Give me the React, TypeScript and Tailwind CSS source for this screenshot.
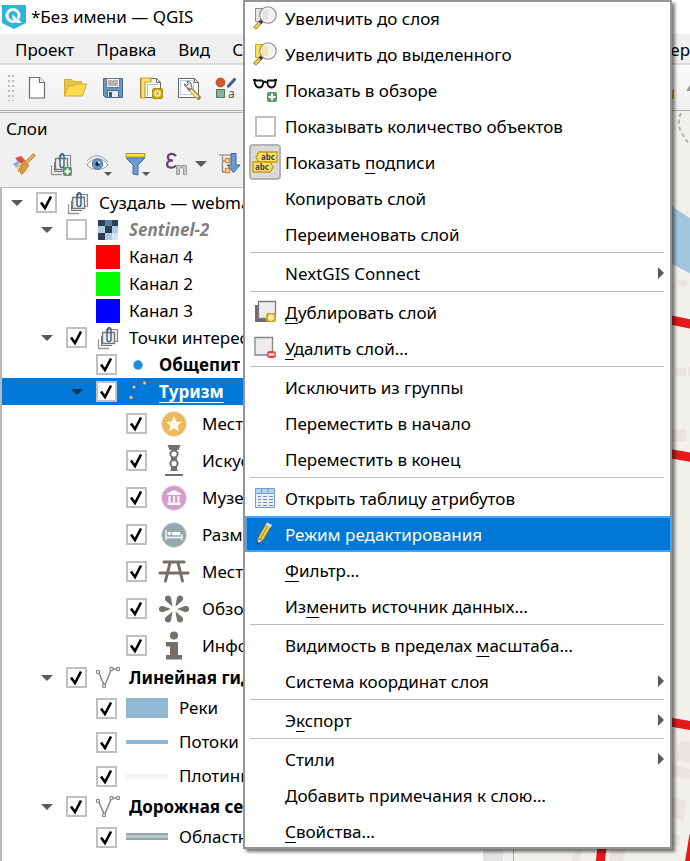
import type { ReactNode } from 'react'

/* ---------- Icons ---------- */

const logo = (
  <svg width="26" height="26" viewBox="0 0 26 26" className="shrink-0">
    <path d="M1 1h24v18l-12 6-12-6z" fill="#2fb4d8" />
    <circle cx="12" cy="11.500" r="6" fill="none" stroke="#fff" strokeWidth="3" />
    <path d="M12 10l9 9h-5l-5-5z" fill="#fff" />
    <path d="M12 10.500l5 5" stroke="#2fb4d8" strokeWidth="1" />
  </svg>
)

const newFile = (
  <svg width="24" height="24" viewBox="0 0 24 24" fill="#fff" stroke="#6d6d6d" strokeWidth="1.200">
    <path d="M4.500 1.500h10l5 5v15.500h-15z" />
    <path d="M14.500 1.500v5h5" />
  </svg>
)

const folder = (
  <svg width="24" height="24" viewBox="0 0 24 24" stroke="#d2aa2f" strokeWidth="1">
    <path d="M1.500 19.500v-16h7l2 2h8v4" fill="#e9c344" />
    <path d="M1.500 20l4-10h5l2-2h11l-4 12z" fill="#fcdc4d" />
  </svg>
)

const floppy = (
  <svg width="24" height="24" viewBox="0 0 24 24">
    <path d="M2.500 2.500h19v19h-17l-2-2z" fill="#6c95c2" stroke="#456c97" />
    <path d="M5.500 2.500h13v9h-13z" fill="#f2f2f2" stroke="#777" />
    <path d="M7 5h10M7 7h10M7 9h10" stroke="#777" strokeWidth="1" />
    <path d="M6.500 14.500h11v7h-11z" fill="#e8ecef" stroke="#456c97" />
    <path d="M8 16h3v5H8z" fill="#34597f" />
  </svg>
)

const star = (
  <g>
    <rect x="13.500" y="12.500" width="10" height="10" rx="1.500" fill="#c6a315" stroke="#b08e0b" />
    <path d="M18.500 13.500v8M14.500 17.500h8M15.700 14.700l5.600 5.600M21.300 14.700l-5.600 5.600" stroke="#fff6c4" strokeWidth="1.400" />
    <circle cx="18.500" cy="17.500" r="1.300" fill="#c6a315" />
  </g>
)

const newLayout = (
  <svg width="24" height="24" viewBox="0 0 24 24">
    <path d="M1.500 2.500h16l4 4v15h-20z" fill="#fff" stroke="#666" />
    <path d="M17.500 2.500v4h4" fill="none" stroke="#666" />
    <path d="M2 2h10v4H6v16H2z" fill="#fbe37a" stroke="#c6a315" strokeWidth="1.200" />
    <path d="M8.500 8.500h11M8.500 8.500v11" stroke="#9fbfe8" />
    {star}
  </svg>
)

const layoutManager = (
  <svg width="24" height="24" viewBox="0 0 24 24">
    <path d="M1.500 2.500h16l4 4v15h-20z" fill="#fff" stroke="#666" />
    <path d="M17.500 2.500v4h4" fill="none" stroke="#666" />
    <path d="M3.500 4.500h13v14h-13z" fill="none" stroke="#b4cdf5" />
    <path d="M12.500 12.500l9 9" stroke="#8a7a4a" strokeWidth="4.500" strokeLinecap="round" />
    <path d="M13.500 14l7.500 7.500" stroke="#f1dc8b" strokeWidth="2.800" />
    <path d="M8 10l5 3.500 2-2-1.500-5c-.800-1-2-1.500-3.500-1l1.500 2.500-2 1.500-2-1.500c0 1 0 1.500.500 2z" fill="#e9e9e9" stroke="#555" strokeWidth=".900" />
  </svg>
)

const styleManager = (
  <svg width="24" height="24" viewBox="0 0 24 24">
    <circle cx="5.500" cy="6.500" r="4.500" fill="#d0592a" stroke="#a5431d" strokeWidth=".700" />
    <path d="M13.500 10l6-6.500" stroke="#41658c" strokeWidth="3.200" strokeLinecap="round" />
    <path d="M1.500 13.500h8v8h-8z" fill="#8fb39a" stroke="#48775a" />
    <text x="13" y="21.500" fontSize="12" fontFamily="Noto Sans, sans-serif" fill="#555">a</text>
  </svg>
)

const brush = (
  <svg width="24" height="24" viewBox="0 0 24 24">
    <path d="M3 6l6-2 5 5-6 3z" fill="#e34b4b" />
    <path d="M1 12l5-3 6 6-5 3z" fill="#79a8e0" />
    <path d="M3 15l8 0 5 3-6 4z" fill="#f6cf3f" />
    <path d="M7 10l9 8-6 4-6-6z" fill="#f7e08a" opacity=".700" />
    <path d="M12 8l5 5.500-7 9-2-2 2-3-4 2 2-4z" fill="#d9993e" stroke="#a8742a" strokeWidth=".600" />
    <path d="M14.500 10.500l7-7" stroke="#b9822f" strokeWidth="3.600" strokeLinecap="round" />
    <path d="M14.500 10.500l7-7" stroke="#e3b05e" strokeWidth="1.800" strokeLinecap="round" />
  </svg>
)

const groupShapes = (
  <g fill="none">
    <path d="M2.500 13v9.500H13" stroke="#999" strokeWidth="1.300" />
    <path d="M5.500 10v9.500H16" stroke="#777" />
    <path d="M10.500 3.500h11v12h-11z" fill="#f1f1f1" stroke="#888" strokeWidth="1.200" />
    <path d="M6.500 6.500h12v11h-12z" fill="#ececec" stroke="#777" strokeWidth="1.300" />
    <path d="M11 6v7c0 3.500 4 3.500 4 0V4c0-3-3.500-3-3.500 0v2" stroke="#3d5f80" strokeWidth="1.400" />
  </g>
)

const group = (
  <svg width="24" height="24" viewBox="0 0 24 24">{groupShapes}</svg>
)

const addGroup = (
  <svg width="24" height="24" viewBox="0 0 24 24">
    {groupShapes}
    <rect x="14" y="15" width="9" height="9" rx="2" fill="#5a9669" />
    <path d="M18.500 16.500v6M15.500 19.500h6" stroke="#fff" strokeWidth="2" />
  </svg>
)

const eye = (
  <svg width="26" height="24" viewBox="0 0 26 24">
    <path d="M1 13c5-8 17-8 21 0-5 6-16 6-21 0z" fill="#fff" stroke="#999" />
    <path d="M1 9c5-7 15-7 21 1" fill="none" stroke="#999" />
    <circle cx="11.500" cy="12" r="5.200" fill="#6b9bce" stroke="#45709c" />
    <circle cx="11.500" cy="12" r="2.200" fill="#1b2735" />
    <circle cx="13" cy="10.500" r="1.100" fill="#fff" />
    <path d="M18 20h8l-4 4z" fill="#555" />
  </svg>
)

const funnel = (
  <svg width="26" height="24" viewBox="0 0 26 24">
    <path d="M1 1.500h19v3.500H1z" fill="#fbe244" stroke="#b59a14" />
    <path d="M1 6h19l-7 7v10l-5-1v-9z" fill="#6d9bcd" stroke="#466f9c" />
    <path d="M17 20h8l-4 4z" fill="#555" />
  </svg>
)

const expression = (
  <svg width="24" height="24" viewBox="0 0 24 24">
    <path d="M12 4c-3-4-9-2-8 2 .500 2 2 2.500 5 2.500-4 0-6 1.500-6 4 0 4 7 4 9 1" fill="none" stroke="#6b3f73" strokeWidth="2.200" />
    <path d="M12.500 13.500h10v9h-3v-5l-1-2h-2l-1 2v5h-3z" fill="#c9c9c9" stroke="#999" />
  </svg>
)

const expand = (
  <svg width="24" height="24" viewBox="0 0 24 24">
    <path d="M1 3h16M4.500 4v16h6M4.500 9h4" fill="none" stroke="#999" strokeWidth="1.600" />
    <path d="M7.500 6.500h4v4h-4zM7.500 16.500h4v4h-4z" fill="#fde2b8" stroke="#f08c1a" strokeWidth="1.500" />
    <path d="M13 1.500h5v11.500h4l-6.500 7.500L9 13h4z" fill="#6d9bcd" stroke="#3c638e" />
  </svg>
)

const raster = (
  <svg width="20" height="20" viewBox="0 0 20 20" shapeRendering="crispEdges">
    <path d="M0 0h20v20H0z" fill="#aecbe6" />
    <path d="M0 0h7v6H0zM14 0h6v6h-6zM7 6h7v7H7zM0 13h7v7H0z" fill="#2d3e50" />
    <path d="M14 13h6v7h-6z" fill="#d4e4f3" />
    <path d="M7 0h7v6H7z" fill="#557da3" />
  </svg>
)

const vectorLine = (
  <svg width="24" height="24" viewBox="0 0 24 24" fill="#fff" stroke="#888" strokeWidth="1.200">
    <path d="M2.500 6l6 14 7-17h6" fill="none" strokeWidth="1.500" />
    <circle cx="2" cy="6" r="1.600" />
    <circle cx="8" cy="20" r="1.600" />
    <circle cx="15.500" cy="3" r="1.600" />
    <circle cx="22" cy="3" r="1.600" />
  </svg>
)

const vectorPoint = (
  <svg width="24" height="24" viewBox="0 0 24 24" fill="#e6d9c4" stroke="#7d7d7d" strokeWidth="1">
    <circle cx="5" cy="17.500" r="1.700" />
    <circle cx="8" cy="7" r="1.700" />
    <circle cx="18.500" cy="3" r="1.700" />
  </svg>
)

const dot = (
  <svg width="24" height="24" viewBox="0 0 24 24">
    <circle cx="12" cy="12" r="4.700" fill="#1f8fe0" />
  </svg>
)

const places = (
  <svg width="32" height="32" viewBox="0 0 32 32">
    <circle cx="16" cy="16" r="12.500" fill="#edb75c" stroke="#f3e6cc" strokeWidth="1" />
    <path d="M16 8l2.300 5.500 5.700.500-4.400 3.800 1.400 5.700-5-3-5 3 1.400-5.700L8 14l5.700-.500z" fill="#fff8e6" />
  </svg>
)

const art = (
  <svg width="32" height="32" viewBox="0 0 32 32">
    <path d="M9.500 0h13l-2 5h-9zM12 26l2-3h4l2 3zM7 29h18v2H7z" fill="#757069" />
    <circle cx="16" cy="9" r="3.600" fill="#fff" stroke="#757069" strokeWidth="2" />
    <circle cx="16" cy="18.500" r="3.600" fill="#fff" stroke="#757069" strokeWidth="2" />
    <path d="M13 12.500h6v2.500h-6zM13 22h6v2h-6z" fill="#757069" />
  </svg>
)

const museum = (
  <svg width="32" height="32" viewBox="0 0 32 32">
    <circle cx="16" cy="16" r="12.500" fill="#d49ccb" stroke="#eadfe6" />
    <path d="M16 8l7 3.500v1.500H9v-1.500zM10.500 14h2v6h-2zM15 14h2v6h-2zM19.500 14h2v6h-2zM9.500 20.500h13v2.500h-13z" fill="#fff" />
  </svg>
)

const hotel = (
  <svg width="32" height="32" viewBox="0 0 32 32">
    <circle cx="16" cy="16" r="12.500" fill="#96a7ae" stroke="#dfe3e0" />
    <path d="M8 11v10M8 18.500h16M24 15.500V21" stroke="#fff" strokeWidth="1.300" fill="none" />
    <circle cx="11.500" cy="14.500" r="1.700" fill="#fff" />
    <rect x="14" y="13" width="8.500" height="3.200" rx="1.200" fill="#fff" />
  </svg>
)

const picnic = (
  <svg width="32" height="32" viewBox="0 0 32 32" stroke="#757069" strokeLinecap="round">
    <path d="M6 6h20M2 17h28" strokeWidth="3.200" />
    <path d="M12 7L7.500 25M20 7l4.500 18" strokeWidth="3" />
  </svg>
)

const viewpoint = (
  <svg width="32" height="32" viewBox="0 0 32 32" fill="#757069">
    {[0, 60, 120, 180, 240, 300].map((angle) => (
      <path
        key={angle}
        d="M19 16l8-3c5.500-1 5.500 7 0 6z"
        transform={`rotate(${angle} 16 16)`}
      />
    ))}
  </svg>
)

const info = (
  <svg width="32" height="32" viewBox="0 0 32 32" fill="#757069">
    <circle cx="16" cy="5.500" r="4" />
    <path d="M8 12h12v13h4v4.500H8V25h4v-8.500H8z" />
  </svg>
)

const river = (
  <svg width="42" height="20" viewBox="0 0 42 20"><path d="M0 0h42v20H0z" fill="#91b8d3" /></svg>
)
const stream = (
  <svg width="42" height="20" viewBox="0 0 42 20"><path d="M0 8h42v4H0z" fill="#91b8d3" /></svg>
)
const dam = (
  <svg width="42" height="20" viewBox="0 0 42 20"><path d="M0 8h42v5H0z" fill="#f4f4f1" /></svg>
)
const road = (
  <svg width="42" height="20" viewBox="0 0 42 20">
    <path d="M0 6h42v7H0z" fill="#93a5a9" />
    <path d="M0 8h42v3H0z" fill="#b6c7c8" />
  </svg>
)

const lens = (
  <g>
    <path d="M1.500 22.500l7.500-8" stroke="#8d7b2b" strokeWidth="3.800" />
    <path d="M2 22l5-5.500" stroke="#f5cf55" strokeWidth="2.300" />
    <path d="M7 17l2.500-2.700" stroke="#333" strokeWidth="3.200" />
    <circle cx="15" cy="9" r="8.200" fill="#f0f0f0" fillOpacity=".900" stroke="#979797" strokeWidth="1.300" />
    <circle cx="15" cy="9" r="6.800" fill="none" stroke="#fff" />
  </g>
)

const zoomLayer = (
  <svg width="24" height="24" viewBox="0 0 24 24">
    <path d="M2.500 2.500h12v13h-12z" fill="#e6e6e6" stroke="#8e8e8e" />
    {lens}
    <path d="M10 4h5v10h-5z" fill="#ddd" opacity=".700" />
  </svg>
)

const zoomSelection = (
  <svg width="24" height="24" viewBox="0 0 24 24">
    <path d="M2.500 2.500h12v13h-12z" fill="#f9df58" stroke="#cfa60e" />
    {lens}
    <path d="M9 4h6v10H9z" fill="#f3e3a0" opacity=".800" />
  </svg>
)

const overview = (
  <svg width="24" height="24" viewBox="0 0 24 24">
    <path d="M2 2.500h7c2 0 1.500 7-2.500 7S1 4.500 2 2.500zM15 2.500h7c1 2 .500 7-3.500 7S14 4.500 15 2.500z" fill="#fff" stroke="#111" strokeWidth="1.800" />
    <path d="M0 2h3M21 2h3M10 4.500q2-1.500 4 0" stroke="#111" strokeWidth="1.800" fill="none" />
    <rect x="14" y="14" width="10" height="10" rx="2" fill="#5a9669" />
    <path d="M19 15.500v7M15.500 19h7" stroke="#fff" strokeWidth="2.200" />
  </svg>
)

const labels = (
  <svg width="26" height="24" viewBox="0 0 26 24">
    <path d="M4 7l3-5h18v10H7z" fill="#fbe36a" stroke="#c49f0a" strokeWidth="1.400" />
    <path d="M1 12h17l3 5-3 5H1z" fill="#fbe36a" stroke="#c49f0a" strokeWidth="1.400" />
    <text x="9" y="10" fontSize="8" fontWeight="bold" fontFamily="Noto Sans, sans-serif" fill="#444">abc</text>
    <text x="3" y="20" fontSize="8" fontWeight="bold" fontFamily="Noto Sans, sans-serif" fill="#444">abc</text>
  </svg>
)

const duplicate = (
  <svg width="24" height="24" viewBox="0 0 24 24">
    <path d="M2 5h17v17H2z" fill="#6e6e6e" />
    <path d="M5.500 1.500h17v17h-17z" fill="#ededed" stroke="#7d7d7d" strokeWidth="1.300" />
    <rect x="13" y="13" width="10" height="9" rx="2" fill="#c9a81c" />
    <path d="M18 14v7M14.500 17.500h7M15.500 15l5 5M20.500 15l-5 5" stroke="#fff3b0" strokeWidth="1.300" />
  </svg>
)

const remove = (
  <svg width="24" height="24" viewBox="0 0 24 24">
    <path d="M2 1.500h17.500v17.500H2z" fill="#ededed" stroke="#858585" strokeWidth="1.300" />
    <rect x="14" y="15" width="9" height="7" rx="3" fill="#e9434b" />
    <path d="M15.500 18.500h6" stroke="#fff" strokeWidth="2" />
  </svg>
)

const attributes = (
  <svg width="24" height="24" viewBox="0 0 24 24">
    <path d="M2.500 2.500h19v19h-19z" fill="#eef0f2" stroke="#7a9cc0" />
    <path d="M3 3h18v4H3z" fill="#b3d4ee" />
    <path d="M3 7.500h18M8.500 3v4M15 3v4" stroke="#7a9cc0" />
    <path d="M5 10.500h3M5 13.500h3M5 16.500h3M5 19.500h3M10 10.500h4M10 13.500h4M10 16.500h4M10 19.500h4M16 10.500h4M16 13.500h4M16 16.500h4M16 19.500h4" stroke="#6b93bd" strokeWidth="1.200" />
  </svg>
)

const pencil = (
  <svg width="24" height="24" viewBox="0 0 24 24">
    <path d="M4 22.500l1-7L13 2l5 2.500-8 14z" fill="#f0d24b" stroke="#7b6a26" strokeWidth=".900" />
    <path d="M7.500 17L15 3.500" stroke="#b2952a" strokeWidth="1.300" />
    <path d="M4 22.500l1-6.500 5 2.500z" fill="#cfd3d6" stroke="#555" strokeWidth=".700" />
    <path d="M4 23l.500-3 2 1z" fill="#333" />
    <path d="M12.500 3l1.500-2.500 5 2.500-1.500 2.500z" fill="#e4e4e4" stroke="#aaa" strokeWidth=".700" />
  </svg>
)

/* ---------- Data ---------- */

interface Layer {
  name: string
  level: 1 | 2 | 3 | 4
  kind?: 'symbol' | 'band' | 'channel'
  open?: boolean
  checked?: boolean
  style?: 'bold' | 'disabled' | 'selected'
  icon?: ReactNode
  swatch?: string
}

const layers: Layer[] = [
  { name: 'Суздаль — webmap', level: 1, open: true, checked: true, icon: group },
  { name: 'Sentinel-2', level: 2, open: true, checked: false, style: 'disabled', icon: raster },
  { name: 'Канал 4', level: 2, kind: 'channel', swatch: 'bg-[#ff0000]' },
  { name: 'Канал 2', level: 2, kind: 'channel', swatch: 'bg-[#00ff00]' },
  { name: 'Канал 3', level: 2, kind: 'channel', swatch: 'bg-[#0000ff]' },
  { name: 'Точки интереса', level: 2, open: true, checked: true, icon: group },
  { name: 'Общепит', level: 3, checked: true, style: 'bold', icon: dot },
  { name: 'Туризм', level: 3, open: true, checked: true, style: 'selected', icon: vectorPoint },
  { name: 'Места', level: 4, kind: 'symbol', checked: true, icon: places },
  { name: 'Искус', level: 4, kind: 'symbol', checked: true, icon: art },
  { name: 'Музеи', level: 4, kind: 'symbol', checked: true, icon: museum },
  { name: 'Разме', level: 4, kind: 'symbol', checked: true, icon: hotel },
  { name: 'Место', level: 4, kind: 'symbol', checked: true, icon: picnic },
  { name: 'Обзор', level: 4, kind: 'symbol', checked: true, icon: viewpoint },
  { name: 'Инфо', level: 4, kind: 'symbol', checked: true, icon: info },
  { name: 'Линейная гидро', level: 2, open: true, checked: true, style: 'bold', icon: vectorLine },
  { name: 'Реки', level: 3, kind: 'band', checked: true, icon: river },
  { name: 'Потоки', level: 3, kind: 'band', checked: true, icon: stream },
  { name: 'Плотины', level: 3, kind: 'band', checked: true, icon: dam },
  { name: 'Дорожная сеть', level: 2, open: true, checked: true, style: 'bold', icon: vectorLine },
  { name: 'Областные', level: 3, kind: 'band', checked: true, icon: road },
]

interface Action {
  before: string
  key?: string
  after?: string
  icon?: ReactNode
  submenu?: boolean
  type?: 'check' | 'pressed' | 'active'
}

const sections: Action[][] = [
  [
    { before: 'Увеличить до слоя', icon: zoomLayer },
    { before: 'Увеличить до выделенного', icon: zoomSelection },
    { before: 'Показать в обзоре', icon: overview },
    { before: 'Показывать количество объектов', type: 'check' },
    { before: 'Показать ', key: 'п', after: 'одписи', icon: labels, type: 'pressed' },
    { before: 'Копировать слой' },
    { before: 'Переименовать слой' },
  ],
  [{ before: 'NextGIS Connect', submenu: true }],
  [
    { before: '', key: 'Д', after: 'ублировать слой', icon: duplicate },
    { before: '', key: 'У', after: 'далить слой…', icon: remove },
  ],
  [
    { before: 'Исключить из группы' },
    { before: 'Переместить в начало' },
    { before: 'Переместить в конец' },
  ],
  [
    { before: 'Открыть таблицу ', key: 'а', after: 'трибутов', icon: attributes },
    { before: 'Режим редактирования', icon: pencil, type: 'active' },
    { before: '', key: 'Ф', after: 'ильтр…' },
    { before: 'Из', key: 'м', after: 'енить источник данных…' },
  ],
  [
    { before: 'Видимость в пределах ', key: 'м', after: 'асштаба…' },
    { before: 'Система координат слоя', submenu: true },
  ],
  [{ before: 'Э', key: 'к', after: 'спорт', submenu: true }],
  [
    { before: 'Стили', submenu: true },
    { before: 'Добавить примечания к слою…' },
    { before: '', key: 'С', after: 'войства…' },
  ],
]

const toolbar = [
  { label: 'Создать проект', icon: newFile },
  { label: 'Открыть проект', icon: folder },
  { label: 'Сохранить', icon: floppy },
  { label: 'Новый макет', icon: newLayout },
  { label: 'Менеджер макетов', icon: layoutManager },
  { label: 'Менеджер стилей', icon: styleManager },
]

const layerTools = [
  { label: 'Панель стилизации', icon: brush },
  { label: 'Добавить группу', icon: addGroup },
  { label: 'Управление видимостью', icon: eye },
  { label: 'Фильтр легенды', icon: funnel },
  { label: 'Фильтр по выражению', icon: expression },
]

const indent = { 1: 'pl-[9px]', 2: 'pl-[39px]', 3: 'pl-[69px]', 4: 'pl-[99px]' }

const textStyle = {
  bold: 'font-bold',
  disabled: 'font-bold italic text-[#808080]',
  selected: 'font-bold text-white underline underline-offset-4 decoration-1',
}

/* ---------- Parts ---------- */

function Checkbox({ checked = false, label }: { checked?: boolean; label: string }) {
  return (
    <span className="grid h-[21px] w-[21px] shrink-0 place-items-center">
      <input
        type="checkbox"
        aria-label={label}
        defaultChecked={checked}
        className="peer col-start-1 row-start-1 h-[21px] w-[21px] appearance-none border-2 border-[#c0c0c0] bg-white"
      />
      <svg
        viewBox="0 0 21 21"
        className="pointer-events-none invisible col-start-1 row-start-1 h-[21px] w-[21px] peer-checked:visible"
      >
        <path d="M5 10.500l4 5.500 6-11.500" fill="none" stroke="#000" strokeWidth="2.600" />
      </svg>
    </span>
  )
}

function DownArrow({ className }: { className: string }) {
  return (
    <svg viewBox="0 0 12 6" className={`h-[6px] w-3 shrink-0 ${className}`}>
      <path d="M0 0h12L6 6z" fill="currentColor" />
    </svg>
  )
}

function LayerRow({ layer }: { layer: Layer }) {
  const { name, level, kind, open, checked, style, icon, swatch } = layer
  const selected = style === 'selected'
  const height = kind === 'symbol' ? 'h-[37px]' : kind === 'band' ? 'h-[34px]' : 'h-[27px]'
  const slot = kind === 'symbol' ? 'w-9 -ml-px' : kind === 'band' ? 'w-[42px]' : 'w-6'

  return (
    <li className={`flex items-center ${height} ${indent[level]} ${selected ? 'bg-[#0078d7]' : ''}`}>
      <span className="mr-[13px] flex w-3 shrink-0">
        {open && <DownArrow className={selected ? 'text-[#0b3352]' : 'text-[#5a5a5a]'} />}
      </span>
      {kind === 'channel' ? (
        <span className="w-[21px] shrink-0" />
      ) : (
        <Checkbox checked={checked} label={name} />
      )}
      <span className={`ml-[9px] flex shrink-0 justify-center ${slot}`}>
        {swatch ? <span className={`h-6 w-6 ${swatch}`} /> : icon}
      </span>
      <span
        className={`truncate whitespace-nowrap ${kind === 'band' ? 'ml-[11px]' : kind === 'symbol' ? 'ml-[10px]' : 'ml-[9px]'} ${
          style ? textStyle[style] : ''
        }`}
      >
        {name}
      </span>
    </li>
  )
}

function MenuItem({ action }: { action: Action }) {
  const { before, key, after, icon, submenu, type } = action
  const text = (
    <span className="pt-0.5 whitespace-nowrap">
      {before}
      {key && <span className="underline decoration-1 underline-offset-4">{key}</span>}
      {after}
    </span>
  )

  if (type === 'check') {
    return (
      <div className="flex h-9 items-center gap-1 pl-1.5">
        <span className="flex w-8 justify-center">
          <Checkbox label={before} />
        </span>
        {text}
      </div>
    )
  }

  return (
    <button
      type="button"
      role="menuitem"
      className={`flex h-9 items-center gap-1 text-left ${
        type === 'active' ? 'ml-[2px] w-[calc(100%-2px)] border-2 border-[#42a5f5] bg-[#0078d7] pl-[2px] text-white' : 'w-full pl-1.5'
      }`}
    >
      <span
        className={`flex w-8 shrink-0 items-center justify-center ${
          type === 'pressed' ? 'h-9 rounded border-2 border-[#b3b3b3] bg-[#dadada]' : ''
        }`}
      >
        {icon}
      </span>
      {text}
      {submenu && (
        <svg viewBox="0 0 6 12" className="mr-2 ml-auto h-3 w-[6px]">
          <path d="M0 0l6 6-6 6z" fill="#5a5a5a" />
        </svg>
      )}
    </button>
  )
}

function ContextMenu() {
  return (
    <div
      role="menu"
      className="absolute top-0 left-[243px] w-[429px] bg-white text-[17px] shadow-[inset_0_0_0_2px_#959595,3px_3px_3px_rgba(0,0,0,0.5)]"
    >
      {sections.map((section, index) => (
        <div key={index}>
          {index > 0 && (
            <div className="h-[3px] pr-2 pl-[7px]">
              <hr className="w-full border-[#bcbcbc]" />
            </div>
          )}
          {section.map((action) => (
            <MenuItem key={action.before + action.after} action={action} />
          ))}
        </div>
      ))}
    </div>
  )
}

function MapCanvas() {
  return (
    <svg viewBox="514 113 176 748" preserveAspectRatio="xMaxYMin slice" className="h-full w-full">
      <path d="M514 113h176v748H514z" fill="#f2f0eb" />
      <g fill="#e9e6e0">
        <path d="M677 283l7-4 4 6-6 4zM675 369h11v8h-11zM688 368h4v9h-4zM672 430h14v12h-14zM677 747l4-7 12 3v20l-16-2zM672 765l18 4v10l-18-3zM672 798l14 3-2 20-12-4zM575 850l7-2-2 13h-8zM612 849h14l-3 12h-14zM672 834l9 2-2 10h-7z" />
      </g>
      <path d="M681 114c-4 10-2 16 2 22 3 5 5 8 8 10" fill="none" stroke="#b4b4b4" strokeWidth="2" strokeDasharray="4 3" />
      <path d="M640 186l50 33v55l-50-26z" fill="#a2c6de" />
      <g fill="none" stroke="#e3191b" strokeWidth="9">
        <path d="M640 310l32 11 20 4M640 449l52 9M640 717l52 9" />
        <path d="M603 840l-3 25M694 835l-5 30" />
      </g>
    </svg>
  )
}

export default function App() {
  return (
    <div className="relative flex h-screen flex-col overflow-hidden bg-[#f0f0f0] font-['Noto_Sans',sans-serif] text-[17px] text-black">
      <header className="flex h-[34px] shrink-0 items-center gap-1 bg-white pl-px">
        {logo}
        <h1>*Без имени — QGIS</h1>
      </header>

      <nav className="flex h-[31px] shrink-0 items-center justify-between overflow-hidden border-b-2 border-[#dadada] pt-0.5 pl-[15px]">
        <div className="flex gap-[22px]">
          <button type="button">Проект</button>
          <button type="button">Правка</button>
          <button type="button">Вид</button>
          <button type="button">Слой</button>
        </div>
        <button type="button">Интер</button>
      </nav>

      <div className="flex h-[46px] shrink-0 items-center justify-between border-b border-[#b4b4b4] bg-gradient-to-b from-[#fafafa] to-[#efefef]">
        <div className="flex items-center gap-[14px] pl-2">
          <svg width="6" height="26" viewBox="0 0 6 26" className="-mr-[3px]">
            <path d="M1 0v26M5 0v26" stroke="#bbb" strokeWidth="2" strokeDasharray="2 3" />
          </svg>
          {toolbar.map((tool) => (
            <button key={tool.label} type="button" aria-label={tool.label}>
              {tool.icon}
            </button>
          ))}
        </div>
        <svg width="24" height="24" viewBox="0 0 24 24">
          <path d="M0 14h8v9H0z" fill="#c6a315" />
          <path d="M20 15l4-6v6z" fill="#999" />
        </svg>
      </div>

      <main className="flex min-h-0 flex-1 pt-px">
        <section className="flex w-[514px] shrink-0 flex-col border-t border-r border-[#b4b4b4]">
          <h2 className="flex h-8 shrink-0 items-center pl-[6px]">Слои</h2>
          <div className="flex h-[42px] shrink-0 items-center gap-[13px] pb-1 pl-3">
            {layerTools.map((tool) => (
              <button key={tool.label} type="button" aria-label={tool.label}>
                {tool.icon}
              </button>
            ))}
            <DownArrow className="-mr-0.5 -ml-1.5 text-[#5a5a5a]" />
            <button type="button" aria-label="Развернуть всё">{expand}</button>
          </div>
          <div className="mr-[10px] flex min-h-0 flex-1 border-t border-l-2 border-[#b9b9b9] bg-white">
            <ul className="min-w-0 flex-1 pt-px">
              {layers.map((layer) => (
                <LayerRow key={layer.name} layer={layer} />
              ))}
            </ul>
            <div className="w-5 bg-[#e3e3e3]" />
          </div>
        </section>
        <div className="min-w-0 flex-1">
          <MapCanvas />
        </div>
      </main>

      <ContextMenu />
    </div>
  )
}
